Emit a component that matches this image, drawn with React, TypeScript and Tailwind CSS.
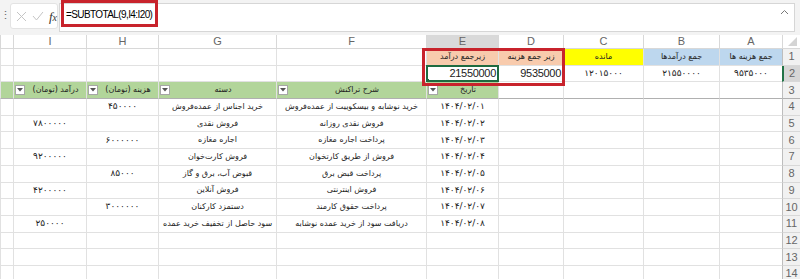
import React from "react";

const cols = [63, 76, 80, 65, 72, 150, 118, 72, 73, 13];
const letters = ["A", "B", "C", "D", "E", "F", "G", "H", "I", ""];

type Cell = { t?: string; bg?: string; dd?: boolean; latin?: boolean; sel?: boolean };

const row1: Cell[] = [
  { t: "جمع هزینه ها", bg: "bg-[#bdd7ee]" },
  { t: "جمع درآمدها", bg: "bg-[#bdd7ee]" },
  { t: "مانده", bg: "bg-[#ffff00]" },
  { t: "زیر جمع هزینه", bg: "bg-[#f8cbad]" },
  { t: "زیرجمع درآمد", bg: "bg-[#f8cbad]" },
  {}, {}, {}, {}, {},
];

const row2: Cell[] = [
  { t: "۹۵۳۵۰۰۰" },
  { t: "۲۱۵۵۰۰۰۰" },
  { t: "۱۲۰۱۵۰۰۰" },
  { t: "9535000", latin: true },
  { t: "21550000", latin: true, sel: true },
  {}, {}, {}, {}, {},
];

const green = "bg-[#b2d59a]";
const row3: Cell[] = [
  {}, {}, {}, {},
  { t: "تاریخ", bg: green, dd: true },
  { t: "شرح تراکنش", bg: green, dd: true },
  { t: "دسته", bg: green, dd: true },
  { t: "هزینه (تومان)", bg: green, dd: true },
  { t: "درآمد (تومان)", bg: green, dd: true },
  { bg: green },
];

const data: [string, string, string, string, string][] = [
  ["۱۴۰۴/۰۲/۰۱", "خرید نوشابه و بیسکوییت از عمده‌فروش", "خرید اجناس از عمده‌فروش", "۴۵۰۰۰۰", ""],
  ["۱۴۰۴/۰۲/۰۲", "فروش نقدی روزانه", "فروش نقدی", "", "۷۸۰۰۰۰۰"],
  ["۱۴۰۴/۰۲/۰۳", "پرداخت اجاره مغازه", "اجاره مغازه", "۶۰۰۰۰۰۰", ""],
  ["۱۴۰۴/۰۲/۰۴", "فروش از طریق کارتخوان", "فروش کارت‌خوان", "", "۹۲۰۰۰۰۰"],
  ["۱۴۰۴/۰۲/۰۵", "پرداخت قبض برق", "قبوض آب، برق و گاز", "۸۵۰۰۰", ""],
  ["۱۴۰۴/۰۲/۰۶", "فروش اینترنتی", "فروش آنلاین", "", "۴۲۰۰۰۰۰"],
  ["۱۴۰۴/۰۲/۰۷", "پرداخت حقوق کارمند", "دستمزد کارکنان", "۳۰۰۰۰۰۰", ""],
  ["۱۴۰۴/۰۲/۰۸", "دریافت سود از خرید عمده نوشابه", "سود حاصل از تخفیف خرید عمده", "", "۲۵۰۰۰۰"],
];

const rows: Cell[][] = [row1, row2, row3];
data.forEach((d) => rows.push([{}, {}, {}, {}, ...d.map((t) => ({ t })), {}]));
while (rows.length < 14) rows.push(cols.map(() => ({})));

const isDigits = (t?: string) => !!t && /^[۰-۹/]+$/.test(t);

function Dropdown() {
  return (
    <span className="flex h-[10px] w-[10px] shrink-0 items-center justify-center border border-[#a6a6a6] bg-white">
      <svg width="6" height="4" viewBox="0 0 6 4">
        <path d="M0 0h6L3 3.5z" fill="#555" />
      </svg>
    </span>
  );
}

export default function App() {
  const template = `18px ${cols.map((c) => c + "px").join(" ")}`;
  return (
    <div className="h-[279px] w-[800px] overflow-hidden bg-white font-['DejaVu_Sans',sans-serif] text-[#222]">
      {/* formula bar */}
      <div className="relative flex h-[35px] items-start bg-[#f3f3f3] pt-[3px]">
        <span className="w-[9px] pt-[7px] text-center font-['Liberation_Sans',sans-serif] text-[11px] leading-none text-[#666]">
          ⋮
        </span>
        <div className="ml-[1px] flex h-[26px] w-[48px] items-center rounded-[3px] border border-[#e3e3e3] bg-white pl-[5px]">
          <svg width="11" height="11" viewBox="0 0 11 11" stroke="#c4c4c4" strokeWidth="1">
            <path d="M1 1l9 9M10 1l-9 9" />
          </svg>
          <svg width="12" height="10" viewBox="0 0 12 10" stroke="#c4c4c4" strokeWidth="1" fill="none" className="ml-[5px]">
            <path d="M1 5l3.5 4L11 1" />
          </svg>
          <span className="ml-[5px] font-['Liberation_Serif',serif] text-[13px] italic leading-none text-[#333]">
            f<span className="text-[10px]">x</span>
          </span>
        </div>
        <div className="ml-[1px] mr-[5px] flex h-[29px] flex-1 items-start justify-between border border-[#d6d6d6] bg-white pl-[6px] pr-[5px] pt-[4px]">
          <span className="font-['Liberation_Sans',sans-serif] text-[10px] leading-[14px] tracking-[-0.6px] text-black">
            =SUBTOTAL(9,I4:I20)
          </span>
          <svg width="9" height="6" viewBox="0 0 9 6" stroke="#777" fill="none" className="mt-[1px]">
            <path d="M1 5l3.5-3.5L8 5" />
          </svg>
        </div>
        <div className="absolute left-[61px] top-0 h-[27px] w-[97px] border-[3px] border-[#c8232c]" />
      </div>

      {/* sheet */}
      <div className="relative" dir="rtl">
        <div className="grid" style={{ gridTemplateColumns: template }}>
          {/* column headers */}
          <div className="relative h-[14px] border-b border-l border-[#d8d8d8] bg-white">
            <svg width="9" height="9" viewBox="0 0 9 9" className="absolute bottom-[2px] right-[3px]">
              <path d="M0 9h9V0z" fill="#d4d4d4" />
            </svg>
          </div>
          {letters.map((l, i) => (
            <div
              key={l + i}
              className={`flex h-[14px] items-center justify-center border-b border-l border-[#d8d8d8] font-['Liberation_Sans',sans-serif] text-[11px] leading-none text-[#666] ${
                l === "E" ? "bg-[#d9d9d9]" : "bg-white"
              }`}
            >
              {l}
            </div>
          ))}

          {rows.map((r, ri) => (
            <React.Fragment key={ri}>
              <div
                className={`flex h-[16.7px] items-center justify-center border-b border-[#d8d8d8] font-['Liberation_Sans',sans-serif] text-[11px] leading-none text-[#666] ${
                  ri === 1 ? "border-l-2 border-l-[#217346] bg-[#d6d6d6]" : "border-l border-l-[#bdbdbd] bg-[#f1f1f1]"
                } ${ri === 2 ? "border-b-[#b0b0b0]" : ""}`}
              >
                {ri + 1}
              </div>
              {r.map((c, ci) => (
                <div
                  key={ci}
                  className={`relative flex h-[16.7px] items-center overflow-visible whitespace-nowrap border-b border-l border-[#e1e1e1] ${
                    c.bg ?? "bg-white"
                  } ${
                    c.latin
                      ? "justify-start pr-[2px] font-['Liberation_Sans',sans-serif] text-[11px] tracking-[-0.3px]"
                      : isDigits(c.t)
                        ? "justify-center text-[9px] tracking-[0.6px]"
                        : "justify-center text-[8px]"
                  } ${ri === 2 ? "border-b-[#b0b0b0]" : ""}`}
                >
                  {c.dd ? (
                    <>
                      <span className="flex-1 text-center">{c.t}</span>
                      <span className="ml-[1px]">
                        <Dropdown />
                      </span>
                    </>
                  ) : (
                    c.t
                  )}
                  {c.sel && (
                    <div className="absolute inset-[-1px] border-2 border-[#1e6b40]">
                      <div className="absolute bottom-[-3px] left-[-3px] h-[4px] w-[4px] bg-[#1e6b40]" />
                    </div>
                  )}
                </div>
              ))}
            </React.Fragment>
          ))}
        </div>
        <div className="absolute left-[422px] top-[13px] h-[38px] w-[143px] border-[3px] border-[#c8232c]" />
      </div>
    </div>
  );
}
